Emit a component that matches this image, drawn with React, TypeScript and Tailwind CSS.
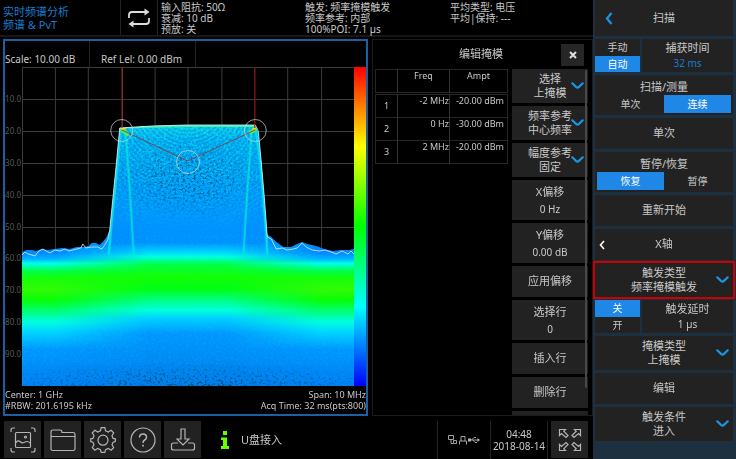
import type { ReactNode } from "react";

const AXIS = ["-10.0", "-20.0", "-30.0", "-40.0", "-50.0", "-60.0", "-70.0", "-80.0", "-90.0"];

const COLUMNS = [33, 66, 100, 133, 166, 200, 233, 266, 300];
const ROWS = [32, 64, 96, 128, 160, 192, 224, 256, 288];

const SHAPE =
  "M0,185 L5,183 L10,183 L14,184 L20,182 L26,183 L33,182 L40,181 L48,182 L55,180 L62,180 L67,179 L70,176 L74,176 L78,178 L82,174 L85,170 L88,163 L92,123 L95,93 L98,61 L130,59 L165,58 L234,58 L237,66 L240,95 L243,130 L246,168 L250,170 L255,175 L262,180 L270,180 L276,177 L281,175 L286,177 L295,179 L303,182 L312,184 L320,183 L328,183 L333,182";

const TRACE =
  "0,188 3,185 6,187 10,188 13,189 17,184 21,182 24,184 28,186 33,183 38,184 43,182 47,184 51,183 55,182 59,181 61,177 64,181 70,180 76,180 80,182 83,178 86,173 88,163 92,123 95,93 98,61 130,59 165,58 200,58 234,58 237,64 240,95 243,130 246,170 250,172 255,182 261,181 266,183 272,182 276,181 281,176 285,180 291,183 298,184 304,183 310,185 315,187 321,184 327,187 330,184 333,187";

const Chevron = ({ className = "" }: { className?: string }) => (
  <svg
    viewBox="0 0 13 8"
    className={`h-2 w-[13px] fill-none stroke-[#1b95e0] ${className}`}
    strokeWidth="2.2"
    strokeLinecap="round"
  >
    <path d="M1.300 1.300L5 4.900Q6.500 6.300 8 4.900L11.700 1.300" />
  </svg>
);

const Spectrum = () => (
  <svg viewBox="0 0 333 319" preserveAspectRatio="none" className="h-full min-w-0 flex-1">
    <defs>
      <linearGradient id="side" x1="0" y1="58" x2="0" y2="319" gradientUnits="userSpaceOnUse">
        <stop offset="0" stopColor="#00b4ff" />
        <stop offset="0.2" stopColor="#0098ff" />
        <stop offset="0.49" stopColor="#0086ff" />
        <stop offset="0.515" stopColor="#00b8ff" />
        <stop offset="0.53" stopColor="#00ffec" />
        <stop offset="0.56" stopColor="#00ff40" />
        <stop offset="0.59" stopColor="#18ff00" />
        <stop offset="0.63" stopColor="#34fa00" />
        <stop offset="0.67" stopColor="#08ff00" />
        <stop offset="0.72" stopColor="#00ff84" />
        <stop offset="0.755" stopColor="#00ffe0" />
        <stop offset="0.79" stopColor="#00d8ff" />
        <stop offset="0.86" stopColor="#0096ff" />
        <stop offset="1" stopColor="#0082f4" />
      </linearGradient>
      <linearGradient id="middle" x1="0" y1="58" x2="0" y2="319" gradientUnits="userSpaceOnUse">
        <stop offset="0" stopColor="#14d8f4" />
        <stop offset="0.06" stopColor="#00b4fa" />
        <stop offset="0.25" stopColor="#00a0ff" />
        <stop offset="0.45" stopColor="#0090ff" />
        <stop offset="0.485" stopColor="#00d0ff" />
        <stop offset="0.505" stopColor="#00ffe0" />
        <stop offset="0.535" stopColor="#00ff40" />
        <stop offset="0.58" stopColor="#14ff00" />
        <stop offset="0.63" stopColor="#00ff10" />
        <stop offset="0.67" stopColor="#00ff80" />
        <stop offset="0.71" stopColor="#00ffdc" />
        <stop offset="0.74" stopColor="#00d0ff" />
        <stop offset="0.8" stopColor="#0096ff" />
        <stop offset="1" stopColor="#007ee8" />
      </linearGradient>
      <linearGradient id="middleFade">
        <stop offset="0.1" stopColor="#000" />
        <stop offset="0.38" stopColor="#fff" />
        <stop offset="0.62" stopColor="#fff" />
        <stop offset="0.9" stopColor="#000" />
      </linearGradient>
      <radialGradient id="floorFade" cx="0.5" cy="1" r="0.5">
        <stop offset="0" stopColor="#fff" />
        <stop offset="0.5" stopColor="#888" />
        <stop offset="1" stopColor="#000" />
      </radialGradient>
      <radialGradient id="bodyFade" cx="0.5" cy="0.5" r="0.5">
        <stop offset="0" stopColor="#ddd" />
        <stop offset="0.5" stopColor="#888" />
        <stop offset="1" stopColor="#000" />
      </radialGradient>
      <linearGradient id="topFade" x1="0" y1="0" x2="0" y2="1">
        <stop offset="0" stopColor="#fff" />
        <stop offset="0.5" stopColor="#999" />
        <stop offset="1" stopColor="#000" />
      </linearGradient>
      <radialGradient id="rings" cx="166" cy="34" r="4" gradientUnits="userSpaceOnUse" spreadMethod="repeat">
        <stop offset="0" stopColor="#004c9c" stopOpacity="0" />
        <stop offset="0.5" stopColor="#004c9c" stopOpacity="0.35" />
        <stop offset="1" stopColor="#004c9c" stopOpacity="0" />
      </radialGradient>
      <filter id="dark" x="0" y="0" width="1" height="1">
        <feTurbulence type="fractalNoise" baseFrequency="0.36 0.46" numOctaves="2" seed="4" />
        <feColorMatrix values="0 0 0 0 0  0 0 0 0 0.08  0 0 0 0 0.2  7 0 0 0 -3.8" />
      </filter>
      <filter id="light" x="0" y="0" width="1" height="1">
        <feTurbulence type="fractalNoise" baseFrequency="0.4 0.5" numOctaves="2" seed="9" />
        <feColorMatrix values="0 0 0 0 0  0 0 0 0 0.9  0 0 0 0 0.95  5 0 0 0 -2.4" />
      </filter>
      <filter id="soft">
        <feGaussianBlur stdDeviation="0.6" />
      </filter>
      <mask id="middleMask">
        <rect width="333" height="319" fill="url(#middleFade)" />
      </mask>
      <mask id="floorMask">
        <rect x="-60" y="270" width="453" height="49" fill="url(#floorFade)" />
      </mask>
      <mask id="bodyMask">
        <ellipse cx="166" cy="112" rx="82" ry="40" fill="url(#bodyFade)" />
      </mask>
      <mask id="topMask">
        <rect x="86" y="58" width="162" height="110" fill="url(#topFade)" />
      </mask>
      <clipPath id="shape">
        <path d={`${SHAPE} V319 H0 Z`} />
      </clipPath>
    </defs>

    <rect width="333" height="319" fill="#000" />
    <g stroke="#3c3c3c">
      {COLUMNS.map((x) => (
        <path key={x} d={`M${x}.5 0V319`} />
      ))}
      {ROWS.map((y) => (
        <path key={y} d={`M0 ${y}.5H333`} />
      ))}
      <path d="M0.5 319V0.5H333" fill="none" />
    </g>

    <g clipPath="url(#shape)">
      <rect width="333" height="319" fill="url(#side)" />
      <rect width="333" height="319" fill="url(#middle)" mask="url(#middleMask)" />
      <g mask="url(#topMask)">
        <rect x="86" y="58" width="162" height="110" fill="url(#rings)" />
        <rect x="86" y="58" width="162" height="110" filter="url(#light)" opacity="0.6" />
      </g>
      <g mask="url(#bodyMask)">
        <rect x="84" y="64" width="164" height="96" filter="url(#dark)" />
      </g>
      <g mask="url(#floorMask)">
        <rect y="250" width="333" height="69" filter="url(#dark)" />
      </g>
      <rect y="168" width="333" height="130" filter="url(#light)" opacity="0.1" />
      <g fill="none" filter="url(#soft)">
        <path d="M104 66L108 123L112 188" stroke="#00ecd8" strokeWidth="2" opacity="0.8" />
        <path d="M230 66L226 123L222 188" stroke="#00ecd8" strokeWidth="2" opacity="0.8" />
        <path d="M99 61L96 93L93 123L89 163L87 188" stroke="#00e0e8" strokeWidth="2.500" />
        <path d="M234 61L239 95L242 130L245 168L246 188" stroke="#00e0e8" strokeWidth="2.500" />
        <path d="M99 62L107 68M235 62L228 66" stroke="#4cf060" strokeWidth="4" />
      </g>
      <path d="M99 60.500L165 59H235" fill="none" stroke="#3cf0b0" strokeWidth="2" />
      <path d="M99 61.500H104M231 61.500H235" stroke="#f0d800" strokeWidth="2" />
    </g>

    <g fill="none">
      <polyline points={TRACE} stroke="#d4e8f4" strokeOpacity="0.85" />
      <g stroke="#a02c30">
        <path d="M100.500 0V61" />
        <path d="M233.500 0V61" stroke="#8c0c10" />
        <path d="M100 63L166 94L234 63" strokeOpacity="0.8" />
      </g>
      <g stroke="#d0dce0" strokeOpacity="0.7">
        <circle cx="100" cy="63.500" r="11" />
        <circle cx="166.500" cy="95" r="11.500" />
        <circle cx="234" cy="63.500" r="11" />
      </g>
    </g>
  </svg>
);

const TopBar = () => (
  <header className="flex h-[37px] shrink-0 border-b-2 border-[#171717] text-[10px] leading-[11px]">
    <h1 className="w-[121px] border-r border-[#222] pt-[5px] pl-[3px] text-[11px] leading-[13px] text-[#1a7ccc]">
      实时频谱分析
      <br />
      频谱 &amp; PvT
    </h1>
    <div className="flex w-[37px] items-center justify-center border-r border-[#222]">
      <svg viewBox="0 0 24 20" className="h-5 w-6 fill-none stroke-[#dcdcdc]" strokeWidth="1.8">
        <path d="M2 10V7Q2 4 5 4H18M22 10V13Q22 16 19 16H6" />
        <path d="M17.500 0.500L22.500 4L17.500 7.500ZM6.500 12.500L1.500 16L6.500 19.500Z" className="fill-[#dcdcdc] stroke-none" />
      </svg>
    </div>
    <div className="w-[147px] pt-0.5 pl-[3px]">
      <p>输入阻抗: 50Ω</p>
      <p>衰减: 10 dB</p>
      <p>预放: 关</p>
    </div>
    <div className="w-[145px] pt-0.5">
      <p>触发: 频率掩模触发</p>
      <p>频率参考: 内部</p>
      <p>100%POI: 7.1 µs</p>
    </div>
    <div className="pt-0.5">
      <p>平均类型: 电压</p>
      <p>平均|保持: ---</p>
    </div>
  </header>
);

const Plot = () => (
  <section className="flex min-w-0 flex-1 flex-col border-2 border-[#1b60a0]">
    <div className="flex h-[26px] shrink-0 text-[10px] leading-4">
      <div className="flex w-[85px] items-end border-r border-[#222]">Scale: 10.00 dB</div>
      <div className="flex w-[106px] items-end border-r border-[#222] pl-[11px] whitespace-nowrap">
        Ref Lel: 0.00 dBm
      </div>
    </div>
    <div className="flex min-h-0 flex-1">
      <div className="flex w-[17px] shrink-0 flex-col py-4 text-[8px] text-[#5a5a5a]">
        {AXIS.map((label) => (
          <span key={label} className="flex flex-1 items-center justify-end pr-px">
            {label}
          </span>
        ))}
      </div>
      <Spectrum />
      <div className="w-3 shrink-0 bg-[linear-gradient(to_bottom,#f00,#ff0,#0f0,#0ff,#00f)]" />
    </div>
    <div className="flex shrink-0 justify-between pt-[3px] pb-[3px] text-[9px] leading-[11px]">
      <div>
        <p>Center: 1 GHz</p>
        <p>#RBW: 201.6195 kHz</p>
      </div>
      <div className="text-right">
        <p>Span: 10 MHz</p>
        <p>Acq Time: 32 ms(pts:800)</p>
      </div>
    </div>
  </section>
);

const MASK_POINTS = [
  { freq: "-2 MHz", ampt: "-20.00 dBm" },
  { freq: "0 Hz", ampt: "-30.00 dBm" },
  { freq: "2 MHz", ampt: "-20.00 dBm" },
];

const MaskTable = () => (
  <table className="w-[133px] border-collapse self-start text-[9px] leading-3">
    <thead>
      <tr className="h-[23px] border border-[#262626]">
        <th className="w-[22px] border-r border-[#333]" />
        <th className="w-[52px] border-r border-[#333] align-top font-normal">Freq</th>
        <th className="align-top font-normal">Ampt</th>
      </tr>
    </thead>
    <tbody>
      <tr className="h-0.5">
        <td colSpan={3} />
      </tr>
      {MASK_POINTS.map((point, i) => (
        <tr key={point.freq} className="h-[23px] border border-[#262626]">
          <td className="border-r border-[#333] text-center">{i + 1}</td>
          <td className="border-r border-[#333] text-right align-top">{point.freq}</td>
          <td className="pr-[3px] text-right align-top">{point.ampt}</td>
        </tr>
      ))}
    </tbody>
  </table>
);

const MaskButton = ({ label, value, menu }: { label: string; value?: string; menu?: boolean }) => {
  if (menu) {
    return (
      <button className="relative h-[34px] shrink-0 bg-[#222] leading-[14px]">
        {label}
        <br />
        {value}
        <Chevron className="absolute top-[13px] right-1" />
      </button>
    );
  }
  if (value) {
    return (
      <button className="h-10 shrink-0 bg-[#222] leading-[17px]">
        {label}
        <br />
        <span className="text-[10px]">{value}</span>
      </button>
    );
  }
  return <button className="h-[31px] shrink-0 bg-[#222]">{label}</button>;
};

const MaskEditor = () => (
  <section className="ml-1 flex w-[221px] shrink-0 flex-col border border-[#1c1c1c] px-[2px] text-[11px]">
    <div className="flex h-[29px] shrink-0 items-center">
      <h2 className="flex-1 pl-[26px] text-center">编辑掩模</h2>
      <button aria-label="关闭" className="mr-[6px] flex h-[22px] w-[23px] items-center justify-center bg-[#262626]">
        <svg viewBox="0 0 8 8" className="size-2 stroke-[#e0e0e0]" strokeWidth="2">
          <path d="M1 1L7 7M7 1L1 7" />
        </svg>
      </button>
    </div>
    <div className="flex min-h-0 flex-1 justify-between">
      <MaskTable />
      <div className="relative mr-[2px] flex w-[76px] flex-col gap-[3px] overflow-hidden">
        <MaskButton label="选择" value="上掩模" menu />
        <MaskButton label="频率参考" value="中心频率" menu />
        <MaskButton label="幅度参考" value="固定" menu />
        <MaskButton label="X偏移" value="0 Hz" />
        <MaskButton label="Y偏移" value="0.00 dB" />
        <MaskButton label="应用偏移" />
        <MaskButton label="选择行" value="0" />
        <MaskButton label="插入行" />
        <MaskButton label="删除行" />
        <MaskButton label="" />
        <div className="absolute top-px right-px h-[92%] w-[2px] rounded-full bg-[#484848]" />
      </div>
    </div>
  </section>
);

const ToolButton = ({ label, children }: { label: string; children: ReactNode }) => (
  <button aria-label={label} className="flex size-[37px] shrink-0 items-center justify-center bg-[#222]">
    <svg viewBox="0 0 26 26" className="size-[26px] fill-none stroke-[#b4b4b4]" strokeWidth="1.2">
      {children}
    </svg>
  </button>
);

const BottomBar = () => (
  <footer className="flex h-10 shrink-0 gap-[3px] pt-0.5 pl-1">
    <ToolButton label="截图">
      <path d="M1 5V3Q1 1 3 1H5M21 1H23Q25 1 25 3V5M25 21V23Q25 25 23 25H21M5 25H3Q1 25 1 23V21" />
      <rect x="5.500" y="5.500" width="15" height="15" rx="1" />
      <path d="M5.500 16Q8 12.500 10 14.500T14 15.500T17 14.500T20.500 16" />
      <circle cx="15.500" cy="10" r="1" />
    </ToolButton>
    <ToolButton label="文件">
      <path d="M1 22V5Q1 3 3 3H10Q12 3 12 5.500H23Q25 5.500 25 7.500V22Q25 23.500 23 23.500H3Q1 23.500 1 22ZM1 9.500H25" />
    </ToolButton>
    <ToolButton label="设置">
      <path d="M11.200 0.700H14.800L15.600 3.900L18.300 5L21.100 3.300L23.700 5.900L22 8.700L23.100 11.400L25.300 11.800V14.600L23.100 15.200L22 17.800L23.700 20.600L21.100 23.200L18.300 21.500L15.600 22.600L14.800 25.300H11.200L10.400 22.600L7.700 21.500L4.900 23.200L2.300 20.600L4 17.800L2.900 15.200L0.700 14.600V11.800L2.900 11.400L4 8.700L2.300 5.900L4.900 3.300L7.700 5L10.400 3.900Z" />
      <circle cx="13" cy="13.200" r="5" />
    </ToolButton>
    <ToolButton label="帮助">
      <circle cx="13" cy="13" r="12" />
      <path d="M9.500 10.500Q9.500 7 13 7T16.500 10.300Q16.500 12 14.700 13T13 16" strokeWidth="1.5" />
      <path d="M13 17.800V19.600" strokeWidth="1.700" />
    </ToolButton>
    <ToolButton label="保存">
      <path d="M11 2H15V12H19L13 18L7 12H11ZM8 16H3.500Q1.500 16 1.500 18V21Q1.500 23 3.500 23H22.500Q24.500 23 24.500 21V18Q24.500 16 22.500 16H18" />
    </ToolButton>
    <div className="flex min-w-0 flex-1 items-center gap-3 pl-[17px] text-[11px]">
      <svg viewBox="0 0 8 18" className="h-[18px] w-2 fill-[#66ff00]">
        <path d="M2 0H6V4H2ZM0 6.500H6V15H8V18H0V15H2V9H0Z" />
      </svg>
      U盘接入
    </div>
    <div className="-mr-[3px] flex w-[54px] shrink-0 items-center justify-center border-x border-[#222]">
      <svg viewBox="0 0 34 10" className="h-[10px] w-[34px] fill-none stroke-[#b4b4b4]" strokeWidth="0.9">
        <path d="M1.500 0.500H6.500V4.500H1.500ZM4 4.500V8.500H6M6.500 5.500H9.500V8.500H6.500Z" />
        <path d="M12.500 9.500V6H19.500V9.500M14 6V1.500H18V6" />
        <path d="M22 5H32M24.500 5L27 2.500H29M26 5L28 7.500H30" />
        <path d="M21 3.500H24V6.500H21ZM30.500 3L33 5L30.500 7Z" className="fill-[#b4b4b4] stroke-none" />
      </svg>
    </div>
    <time
      dateTime="2018-08-14T04:48"
      className="flex w-[57px] shrink-0 flex-col items-center justify-center border-r border-[#222] text-[10px] leading-3"
    >
      <span>04:48</span>
      <span>2018-08-14</span>
    </time>
    <div className="pr-[5px]">
      <ToolButton label="全屏">
        <path d="M2.500 2.500H8.500L6.800 4.200L11 8.500L9 10.500L4.500 6.500L2.500 8.500Z" />
        <path d="M23.500 2.500H17.500L19.200 4.200L15 8.500L17 10.500L21.500 6.500L23.500 8.500Z" />
        <path d="M2.500 23.500H8.500L6.800 21.800L11 17.500L9 15.500L4.500 19.500L2.500 17.500Z" />
        <path d="M23.500 23.500H17.500L19.200 21.800L15 17.500L17 15.500L21.500 19.500L23.500 17.500Z" />
      </ToolButton>
    </div>
  </footer>
);

const Toggle = ({ options, active }: { options: string[]; active: number }) => (
  <div className="flex w-[45px] shrink-0 flex-col bg-[#222] text-[10px]">
    {options.map((option, i) => (
      <button
        key={option}
        aria-pressed={i === active}
        className="flex-1 leading-[14px] aria-pressed:bg-[#1f87e5] aria-pressed:text-white"
      >
        {option}
      </button>
    ))}
  </div>
);

type SplitItemProps = {
  label: string;
  value: string;
  options: string[];
  active: number;
  blue?: boolean;
};

const SplitItem = ({ label, value, options, active, blue }: SplitItemProps) => (
  <div className="flex h-[33px] shrink-0 gap-0.5">
    <Toggle options={options} active={active} />
    <button className="flex-1 bg-[#222] leading-[15px]">
      {label}
      <br />
      <span className={blue ? "text-[10px] text-[#1a7ccc]" : "text-[10px]"}>{value}</span>
    </button>
  </div>
);

const SwitchItem = ({ label, options, active }: { label: string; options: string[]; active: number }) => (
  <div className="h-10 shrink-0 bg-[#222] px-[2px] pt-1 text-center">
    <p className="leading-4">{label}</p>
    <div className="flex h-[18px] text-[10px]">
      {options.map((option, i) => (
        <button
          key={option}
          aria-pressed={i === active}
          className="flex-1 aria-pressed:bg-[#1f87e5] aria-pressed:text-white"
        >
          {option}
        </button>
      ))}
    </div>
  </div>
);

const PlainItem = ({ label }: { label: string }) => (
  <button className="h-[31px] shrink-0 bg-[#222]">{label}</button>
);

const MenuItem = ({ label, value, selected }: { label: string; value: string; selected?: boolean }) => (
  <button
    className={
      selected
        ? "relative h-[34px] shrink-0 bg-[#222] leading-[14px] outline-2 outline-[#cc0000]"
        : "relative h-[34px] shrink-0 bg-[#222] leading-[14px]"
    }
  >
    {label}
    <br />
    {value}
    <Chevron className="absolute top-[13px] right-1" />
  </button>
);

const SideMenu = () => (
  <aside className="flex w-[143px] shrink-0 flex-col gap-[3px] overflow-hidden bg-[#1c3040] pr-[3px] pl-[2px] text-[11px]">
    <div className="flex h-9 shrink-0 items-center bg-[#222]">
      <button aria-label="返回" className="w-7 pl-[10px]">
        <svg viewBox="0 0 8 13" className="h-[13px] w-2 fill-none stroke-[#1b95e0]" strokeWidth="2.2">
          <path d="M6.500 1L2 6.500L6.500 12" />
        </svg>
      </button>
      <h2 className="flex-1 pr-7 text-center">扫描</h2>
    </div>
    <SplitItem label="捕获时间" value="32 ms" options={["手动", "自动"]} active={1} blue />
    <SwitchItem label="扫描/测量" options={["单次", "连续"]} active={1} />
    <PlainItem label="单次" />
    <SwitchItem label="暂停/恢复" options={["恢复", "暂停"]} active={0} />
    <PlainItem label="重新开始" />
    <button className="flex h-[31px] shrink-0 items-center bg-[#222] pl-1">
      <svg viewBox="0 0 6 10" className="h-[10px] w-1.5 fill-none stroke-white" strokeWidth="1.6">
        <path d="M5 1L1.500 5L5 9" />
      </svg>
      <span className="flex-1 pr-[10px]">X轴</span>
    </button>
    <MenuItem label="触发类型" value="频率掩模触发" selected />
    <SplitItem label="触发延时" value="1 µs" options={["关", "开"]} active={0} />
    <MenuItem label="掩模类型" value="上掩模" />
    <PlainItem label="编辑" />
    <MenuItem label="触发条件" value="进入" />
  </aside>
);

const App = () => {
  return (
    <div className="flex h-screen bg-black font-['Noto_Sans','Noto_Sans_CJK_SC',sans-serif] text-[#c8c8c8]">
      <div className="flex min-w-0 flex-1 flex-col">
        <TopBar />
        <main className="flex min-h-0 flex-1 pt-0.5 pb-[3px] pl-[3px]">
          <Plot />
          <MaskEditor />
        </main>
        <BottomBar />
      </div>
      <SideMenu />
    </div>
  );
};

export default App;
